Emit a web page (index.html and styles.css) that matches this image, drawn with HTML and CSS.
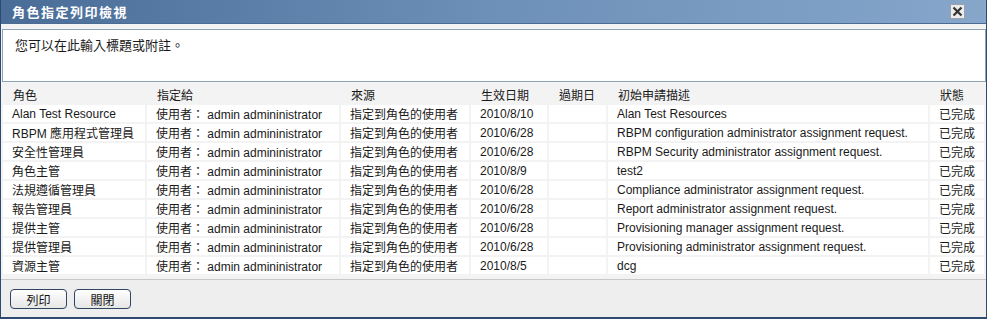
FILE: index.html
```html
<!DOCTYPE html>
<html lang="zh-Hant">
<head>
    <meta charset="UTF-8">
    <title>角色指定列印檢視</title>
    <link rel="stylesheet" href="styles.css">
</head>
<body>
    <div class="dialog">
        <div class="titlebar">
            <span class="title">角色指定列印檢視</span>
            <button class="close" title="關閉">
                <svg width="11" height="11" viewBox="0 0 11 11">
                    <path d="M1.5 1.5 L9.5 9.5 M9.5 1.5 L1.5 9.5" stroke="#333" stroke-width="2.2" fill="none"/>
                </svg>
            </button>
        </div>

        <div class="content">
            <div class="note">您可以在此輸入標題或附註。</div>

            <table class="grid">
                <thead>
                    <tr>
                        <th class="c-role">角色</th>
                        <th class="c-to">指定給</th>
                        <th class="c-src">來源</th>
                        <th class="c-eff">生效日期</th>
                        <th class="c-exp">過期日</th>
                        <th class="c-desc">初始申請描述</th>
                        <th class="c-status">狀態</th>
                    </tr>
                </thead>
                <tbody>
                    <tr><td>Alan Test Resource</td><td>使用者： admin admininistrator</td><td>指定到角色的使用者</td><td>2010/8/10</td><td></td><td>Alan Test Resources</td><td>已完成</td></tr>
                    <tr><td>RBPM 應用程式管理員</td><td>使用者： admin admininistrator</td><td>指定到角色的使用者</td><td>2010/6/28</td><td></td><td>RBPM configuration administrator assignment request.</td><td>已完成</td></tr>
                    <tr><td>安全性管理員</td><td>使用者： admin admininistrator</td><td>指定到角色的使用者</td><td>2010/6/28</td><td></td><td>RBPM Security administrator assignment request.</td><td>已完成</td></tr>
                    <tr><td>角色主管</td><td>使用者： admin admininistrator</td><td>指定到角色的使用者</td><td>2010/8/9</td><td></td><td>test2</td><td>已完成</td></tr>
                    <tr><td>法規遵循管理員</td><td>使用者： admin admininistrator</td><td>指定到角色的使用者</td><td>2010/6/28</td><td></td><td>Compliance administrator assignment request.</td><td>已完成</td></tr>
                    <tr><td>報告管理員</td><td>使用者： admin admininistrator</td><td>指定到角色的使用者</td><td>2010/6/28</td><td></td><td>Report administrator assignment request.</td><td>已完成</td></tr>
                    <tr><td>提供主管</td><td>使用者： admin admininistrator</td><td>指定到角色的使用者</td><td>2010/6/28</td><td></td><td>Provisioning manager assignment request.</td><td>已完成</td></tr>
                    <tr><td>提供管理員</td><td>使用者： admin admininistrator</td><td>指定到角色的使用者</td><td>2010/6/28</td><td></td><td>Provisioning administrator assignment request.</td><td>已完成</td></tr>
                    <tr><td>資源主管</td><td>使用者： admin admininistrator</td><td>指定到角色的使用者</td><td>2010/8/5</td><td></td><td>dcg</td><td>已完成</td></tr>
                </tbody>
            </table>
        </div>

        <div class="footer">
            <button class="btn">列印</button>
            <button class="btn">關閉</button>
        </div>
    </div>
</body>
</html>
```

FILE: styles.css
```css
body {
    margin: 0;
    font-family: "Liberation Sans", "Noto Sans CJK TC", sans-serif;
    font-size: 12px;
    color: #1a1a1a;
    background-color: #fff;
}
.dialog {
    width: 987px;
    height: 319px;
    box-sizing: border-box;
    border: 1px solid #2c4a72;
    border-top: none;
    border-bottom-width: 2px;
    background-color: #f0f0f0;
    display: flex;
    flex-direction: column;
}
.titlebar {
    height: 23px;
    display: flex;
    align-items: center;
    justify-content: space-between;
    padding: 0 21px 0 11px;
    background: linear-gradient(to right, #4a6d98, #6d90b9 50%, #86a6ca);
    border-bottom: 1px solid #4b6b92;
}
.title {
    color: #fff;
    font-weight: bold;
    font-size: 13px;
    letter-spacing: 1.5px;
}
.close {
    width: 15px;
    height: 15px;
    padding: 0;
    border: 1px solid #9aa3ad;
    background-color: #ececec;
    display: flex;
    align-items: center;
    justify-content: center;
    cursor: pointer;
}
.content {
    flex: 1;
    background-color: #f3f3f3;
    padding-top: 5px;
    border-bottom: 1px solid #c8c8c8;
}
.note {
    height: 53px;
    margin: 0 0 0 1px;
    padding: 5px 12px;
    box-sizing: border-box;
    background-color: #fff;
    border: 1px solid #8ea2b8;
    font-size: 13px;
}
.grid {
    width: 100%;
    border-collapse: separate;
    border-spacing: 2px;
    margin-top: 1px;
}
.grid th {
    font-weight: normal;
    text-align: left;
    height: 18px;
    padding: 0 0 0 10px;
}
.grid td {
    background-color: #fff;
    height: 17px;
    padding: 0 0 0 9px;
    white-space: nowrap;
}
.c-role { width: 132px; }
.c-to { width: 182px; }
.c-src { width: 118px; }
.c-eff { width: 66px; }
.c-exp { width: 47px; }
.c-desc { width: 310px; }
.footer {
    height: 37px;
    display: flex;
    align-items: center;
    gap: 7px;
    padding: 0 9px;
    background-color: #eeeeee;
}
.btn {
    width: 57px;
    height: 20px;
    font-family: "Liberation Sans", "Noto Sans CJK TC", sans-serif;
    font-size: 12px;
    color: #111;
    border: 1px solid #2f4560;
    border-radius: 4px;
    background: linear-gradient(#ffffff, #e6e6e6);
    cursor: pointer;
}
```
